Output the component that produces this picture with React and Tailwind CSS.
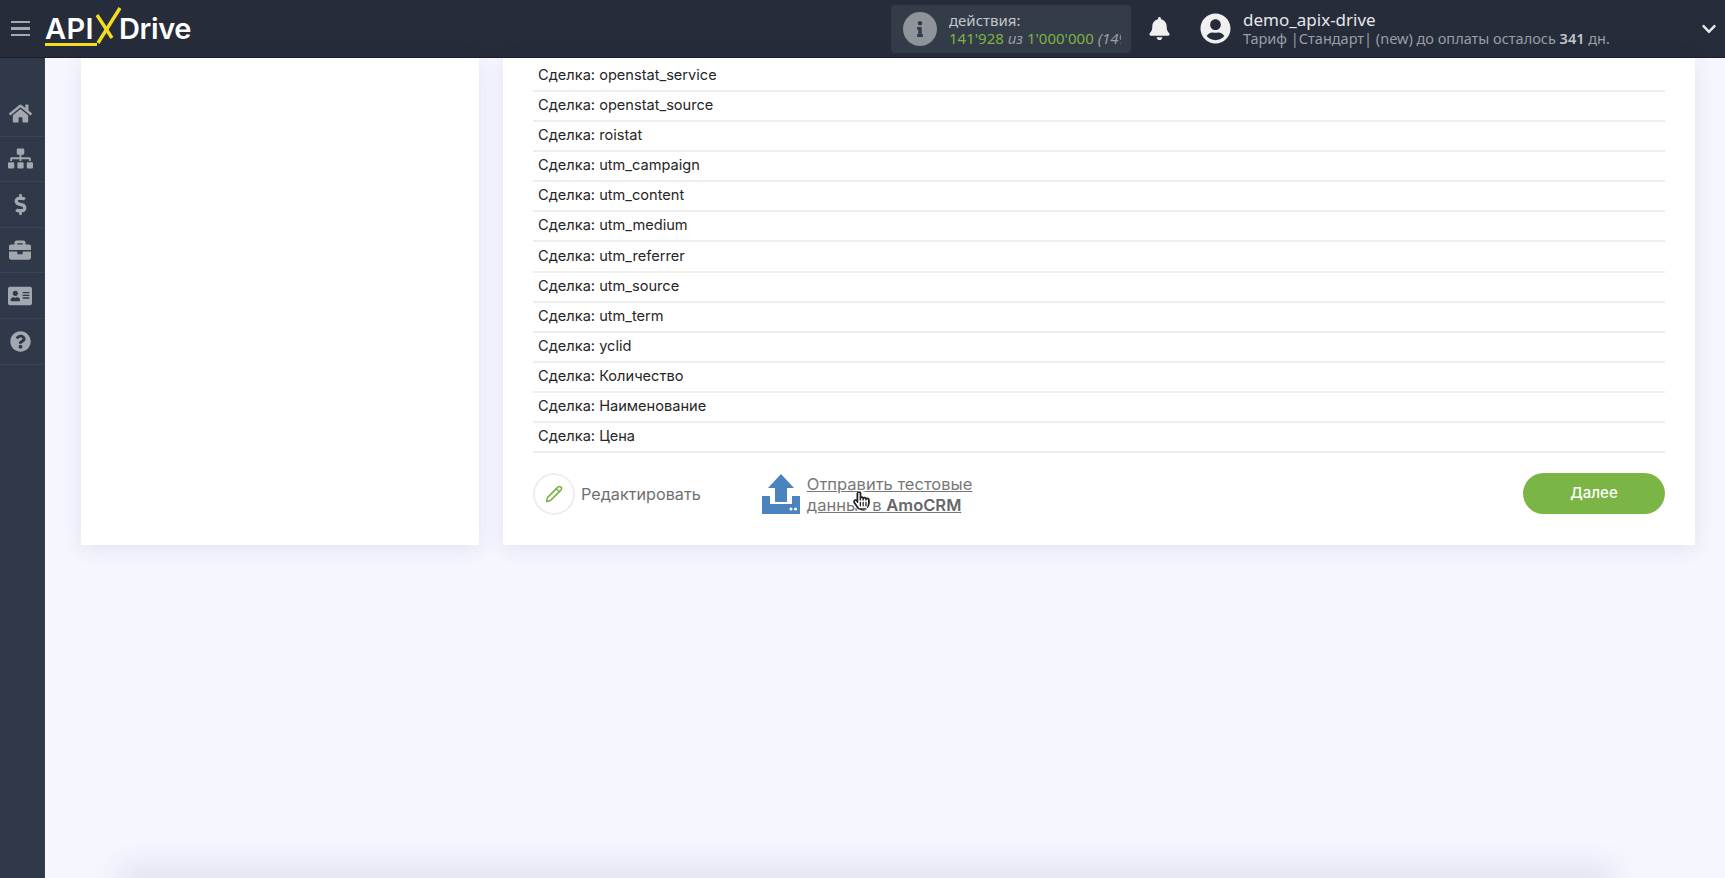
import { FaHome, FaSitemap, FaDollarSign, FaBriefcase, FaAddressCard, FaQuestionCircle, FaBell, FaUserCircle, FaChevronDown, FaInfo, FaRegHandPointer } from 'react-icons/fa';
import { Pencil } from 'lucide-react';

const rows = [
  'openstat_service', 'openstat_source', 'roistat', 'utm_campaign', 'utm_content', 'utm_medium',
  'utm_referrer', 'utm_source', 'utm_term', 'yclid', 'Количество', 'Наименование', 'Цена',
];

const menu = [
  { icon: FaHome, size: 'text-[23px]' },
  { icon: FaSitemap, size: 'text-[25px]' },
  { icon: FaDollarSign, size: 'text-[21px]' },
  { icon: FaBriefcase, size: 'text-[22px]' },
  { icon: FaAddressCard, size: 'text-[24px]' },
  { icon: FaQuestionCircle, size: 'text-[21px]' },
];

function Logo() {
  return (
    <div className="relative ml-[15px] flex h-[40px] w-[150px] items-center font-['Inter',sans-serif] text-[29px] font-semibold tracking-[-0.4px] text-white">
      <span className="tracking-[0.4px]">API</span>
      <svg className="ml-[-1px] mr-[-3px] mt-[-6px] h-[38px] w-[29px] shrink-0" viewBox="0 0 29 38" fill="none" stroke="#f5dc1e" strokeWidth="3.4">
        <path d="M4 8 L19 31" />
        <path d="M27 1 L5 36" />
      </svg>
      <span>Drive</span>
      <div className="absolute left-[0px] top-[34px] h-[3px] w-[52px] bg-[#f5dc1e]"></div>
    </div>
  );
}

function Header() {
  return (
    <header className="flex h-[58px] shrink-0 items-center border-b border-[#1a1e29] bg-[#262c3a] font-['Noto_Sans',sans-serif]">
      <div className="ml-[11px] flex w-[19px] flex-col gap-[4px]">
        <div className="h-[2.5px] bg-[#a4a8b0]"></div>
        <div className="h-[2.5px] bg-[#a4a8b0]"></div>
        <div className="h-[2.5px] bg-[#a4a8b0]"></div>
      </div>
      <Logo />
      <div className="ml-[696px] flex h-[48px] w-[240px] items-center rounded-[4px] bg-[#343c49] pl-[12px]">
        <div className="flex h-[34px] w-[34px] shrink-0 items-center justify-center rounded-full bg-[#8f939a] text-[16px] text-[#343c49]">
          <FaInfo />
        </div>
        <div className="ml-[12px] w-[172px] overflow-hidden whitespace-nowrap text-[15px] leading-[18px]">
          <div className="text-[#c3c6cb]">действия:</div>
          <div className="text-[#7cb342]">
            141'928 <i className="text-[#9a9ea5]">из</i> 1'000'000 <i className="text-[#9a9ea5]">(14%)</i>
          </div>
        </div>
      </div>
      <FaBell className="ml-[17px] text-[23px] text-[#f0f0f0]" />
      <FaUserCircle className="ml-[29px] text-[31px] text-[#f0f0f0]" />
      <div className="ml-[12px] whitespace-nowrap">
        <div className="text-[17px] leading-[19px] text-[#e6e7ea]">demo_apix-drive</div>
        <div className="text-[14.5px] leading-[18px] text-[#9a9ea5]">
          Тариф |Стандарт| (new) до оплаты осталось <b className="font-semibold text-[#c3c6cb]">341</b> дн.
        </div>
      </div>
      <FaChevronDown className="ml-auto mr-[8px] text-[16px] text-[#e6e7ea]" />
    </header>
  );
}

function Sidebar() {
  return (
    <aside className="w-[45px] shrink-0 border-r border-[#3a4250] bg-[#2f3949] pt-[33px]">
      {menu.map((item, index) => {
        const Icon = item.icon;
        return (
          <div key={index} className="flex h-[45.6px] items-center justify-center border-b border-[#3a4453] pr-[4px] text-[#a3a7ae]">
            <Icon className={item.size} />
          </div>
        );
      })}
    </aside>
  );
}

function UploadIcon() {
  return (
    <svg className="h-[40px] w-[38px] shrink-0" viewBox="0 0 38 40" fill="none">
      <path d="M19 0 L32 14 H25 V28 H13 V14 H6 Z" fill="#4a83bf" />
      <path d="M0 22 H8 V30 H30 V22 H38 V40 H0 Z" fill="#4a83bf" />
      <circle cx="29" cy="35" r="1.5" fill="#fff" />
      <circle cx="33.5" cy="35" r="1.5" fill="#fff" />
    </svg>
  );
}

export default function App() {
  return (
    <div className="flex h-[878px] w-[1725px] flex-col overflow-hidden bg-[#f5f6fe]">
      <Header />
      <div className="flex min-h-0 flex-1">
        <Sidebar />
        <main className="flex flex-1 flex-col pl-[36px] pr-[30px]">
          <div className="flex h-[487px] gap-[24px]">
            <div className="w-[398px] bg-white shadow-[0_4px_20px_rgba(60,60,110,0.10)]"></div>
            <div className="flex-1 bg-white px-[30px] shadow-[0_4px_20px_rgba(60,60,110,0.10)]">
              <div className="pt-[4px] font-['Inter',sans-serif] text-[14.6px] text-[#262626]">
                {rows.map((row) => (
                  <div key={row} className="flex h-[30.08px] items-center border-b-2 border-[#eeeeee] px-[5px]">
                    Сделка: {row}
                  </div>
                ))}
              </div>
              <div className="mt-[19px] flex items-center font-['Inter',sans-serif]">
                <div className="flex h-[42px] w-[42px] items-center justify-center rounded-full border-2 border-[#eeeeee] text-[#7cb342]">
                  <Pencil size={18} />
                </div>
                <span className="ml-[6px] text-[16.2px] text-[#6f6f6f]">Редактировать</span>
                <div className="relative ml-[61px] flex items-center">
                  <UploadIcon />
                  <div className="ml-[7px] mt-[2px] text-[16.5px] leading-[21px] text-[#777777] underline">
                    <div>Отправить тестовые</div>
                    <div>данные в <b className="font-semibold text-[#666666]">AmoCRM</b></div>
                  </div>
                  <FaRegHandPointer className="absolute left-[90px] top-[19px] rounded-full bg-white text-[19px] text-[#222222]" />
                </div>
                <button className="mb-[2px] ml-auto h-[41px] w-[142px] rounded-full bg-[#7ab545] text-[15px] font-medium text-white">
                  Далее
                </button>
              </div>
            </div>
          </div>
          <div className="mt-auto ml-[46px] mr-[90px] h-0 shadow-[0_0_30px_8px_rgba(60,60,100,0.18)]"></div>
        </main>
      </div>
    </div>
  );
}
